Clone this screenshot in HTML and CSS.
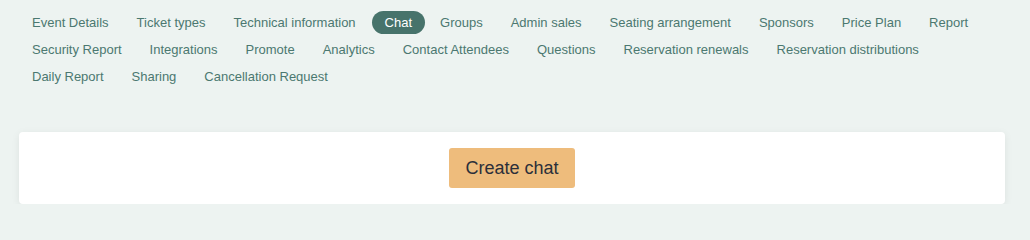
FILE: index.html
```html
<!DOCTYPE html>
<html lang="en">
<head>
<meta charset="utf-8">
<title>Chat</title>
<link rel="stylesheet" href="styles.css">
</head>
<body>
<div class="page">
  <nav class="tabs">
    <a class="tab">Event Details</a>
    <a class="tab">Ticket types</a>
    <a class="tab">Technical information</a>
    <a class="tab active">Chat</a>
    <a class="tab">Groups</a>
    <a class="tab">Admin sales</a>
    <a class="tab">Seating arrangement</a>
    <a class="tab">Sponsors</a>
    <a class="tab">Price Plan</a>
    <a class="tab">Report</a>
    <a class="tab">Security Report</a>
    <a class="tab">Integrations</a>
    <a class="tab">Promote</a>
    <a class="tab">Analytics</a>
    <a class="tab">Contact Attendees</a>
    <a class="tab">Questions</a>
    <a class="tab">Reservation renewals</a>
    <a class="tab">Reservation distributions</a>
    <a class="tab">Daily Report</a>
    <a class="tab">Sharing</a>
    <a class="tab">Cancellation Request</a>
  </nav>
  <section class="card">
    <button class="btn-create">Create chat</button>
  </section>
</div>
</body>
</html>
```
FILE: styles.css
```css
html, body {
  margin: 0;
  padding: 0;
  background: #edf3f1;
  font-family: "Liberation Sans", Arial, sans-serif;
}
html {
  height: 222px;
  overflow: hidden;
}
.page {
  padding: 11px 25px 0 19px;
}
.tabs {
  display: flex;
  flex-wrap: wrap;
  column-gap: 2px;
  row-gap: 4px;
}
.tab {
  display: block;
  height: 23px;
  line-height: 23px;
  padding: 0 13px;
  font-size: 13px;
  color: #4b7870;
  border-radius: 12px;
  white-space: nowrap;
  cursor: pointer;
}
.tab.active {
  background: #47736b;
  color: #ffffff;
  margin-left: 1px;
}
.card {
  margin-top: 44px;
  background: #ffffff;
  border-radius: 4px;
  box-shadow: 0 2px 8px rgba(0, 0, 0, 0.07);
  padding: 16px;
  display: flex;
  justify-content: center;
}
.btn-create {
  height: 40px;
  padding: 0 16px;
  border: none;
  border-radius: 3px;
  background: #eebc7c;
  color: #2b2f3a;
  font-family: "Liberation Sans", Arial, sans-serif;
  font-size: 18px;
  cursor: pointer;
}
```
